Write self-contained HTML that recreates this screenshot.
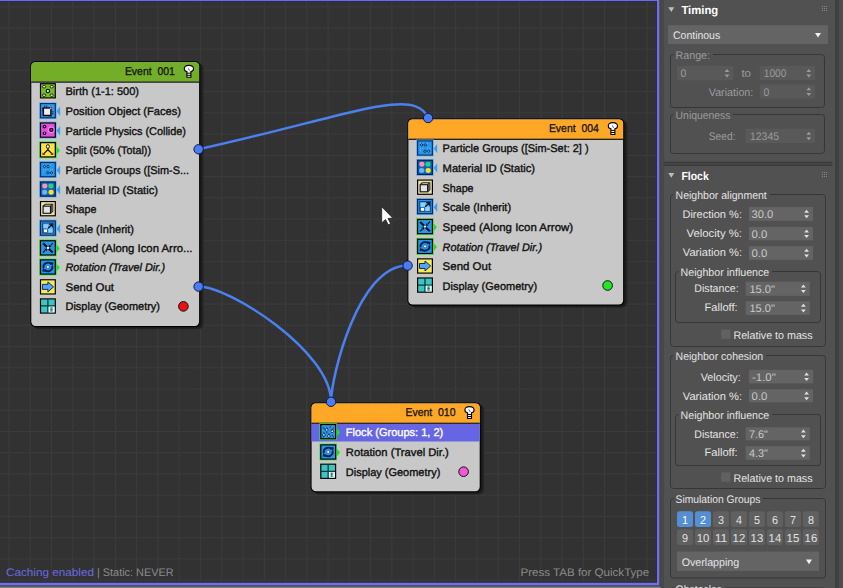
<!DOCTYPE html>
<html lang="en"><head><meta charset="utf-8"><title>Particle View</title>
<style>html,body{margin:0;padding:0;background:#454545;overflow:hidden}svg{display:block}text{font-family:"Liberation Sans", sans-serif;white-space:pre}</style></head><body>
<svg width="843" height="588" viewBox="0 0 843 588" text-rendering="geometricPrecision">
<defs><pattern id="grid" x="8.5" y="6.2" width="21.27" height="21.24" patternUnits="userSpaceOnUse"><path d="M0.5 0 V21.24 M0 0.5 H21.27" stroke="#3b3b3b" stroke-width="1" fill="none"/></pattern>
<pattern id="grip" width="2" height="2" patternUnits="userSpaceOnUse"><rect width="1" height="1" fill="#8a8a8a"/></pattern></defs>
<rect width="843" height="588" fill="#454545"/>
<rect x="-5" y="-5" width="665.5" height="591.6" fill="#3c3c74"/>
<rect x="-5" y="-5" width="664.6" height="590.3" fill="#7671ce"/>
<rect x="-5" y="0.95" width="662" height="581.85" fill="#28286a"/>
<rect x="-5" y="2" width="661.1" height="579.7" fill="#323232"/>
<rect x="0" y="2" width="656.1" height="579.7" fill="url(#grid)"/>
<g fill="none" stroke="#4b80f0" stroke-width="2.5" stroke-linecap="round">
<path d="M198.3 149.3 C344.7 117.3 415.3 85.2 428.1 118.2"/>
<path d="M198.7 286.4 C229.3 286.4 331.1 351.6 331.1 401.8"/>
<path d="M407.5 265.4 C358.2 265.4 331.1 376.7 331.1 401.8"/>
</g>
<rect x="33.7" y="63.4" width="169.8" height="265.8" rx="5" fill="#1a1a1a" opacity="0.6"/>
<rect x="31.9" y="62.4" width="169.8" height="265.8" rx="5" fill="#161616" opacity="0.8"/>
<rect x="30.3" y="61.2" width="169.8" height="265.8" rx="5" fill="#000"/>
<rect x="31.3" y="62.2" width="167.8" height="263.8" rx="4.2" fill="#c8c8c8"/>
<path d="M31.3 81.7 V66.2 Q31.3 62.2 35.3 62.2 H195.1 Q199.1 62.2 199.1 66.2 V81.7Z" fill="#73ae28"/>
<rect x="31.3" y="81.5" width="167.8" height="1.2" fill="#111"/>
<text x="124.9" y="74.5" font-size="11.3" fill="#141414" stroke="#141414" stroke-width="0.3" textLength="50.0" lengthAdjust="spacingAndGlyphs">Event  001</text>
<g transform="translate(183.9,64.9)"><path d="M5 0.5 C8.4 0.5 9.6 2.2 9.6 3.8 C9.6 5.4 8.2 6.4 7 6.6 V12.4 H3 V6.6 C1.8 6.4 0.4 5.4 0.4 3.8 C0.4 2.2 1.6 0.5 5 0.5Z" fill="#fff" stroke="#000" stroke-width="1.1"/><path d="M3 8.3 H7 M3 10.4 H7" stroke="#000" stroke-width="1"/><path d="M4.4 3.4 L5.6 5.8" stroke="#333" stroke-width="0.8"/></g>
<g transform="translate(39.90,83.10) scale(1,0.96)"><rect x="0" y="0" width="16" height="16" fill="#000"/><rect x="1.2" y="1.2" width="13.6" height="13.6" fill="#7ab82a"/><ellipse cx="4.2" cy="3.8" rx="1.7" ry="1.3" fill="#e4f6c4" stroke="#14300a" stroke-width="1"/><ellipse cx="11.8" cy="3.8" rx="1.7" ry="1.3" fill="#e4f6c4" stroke="#14300a" stroke-width="1"/><ellipse cx="4.2" cy="12.6" rx="1.7" ry="1.3" fill="#e4f6c4" stroke="#14300a" stroke-width="1"/><ellipse cx="11.8" cy="12.6" rx="1.7" ry="1.3" fill="#e4f6c4" stroke="#14300a" stroke-width="1"/><circle cx="8" cy="8.3" r="1.7" fill="#fff" stroke="#0a1a04" stroke-width="1.2"/></g>
<text x="65.5" y="95.2" font-size="11.1" fill="#0e0e0e" stroke="#0e0e0e" stroke-width="0.35" textLength="73.5" lengthAdjust="spacingAndGlyphs">Birth (1-1: 500)</text>
<path d="M60.1 106.6 V116.0 L56.5 111.3Z" fill="#37a1f2"/>
<g transform="translate(39.90,103.00) scale(1,0.96)"><rect x="-0.8" y="-0.8" width="17.6" height="17.6" fill="#5cb4f8"/><rect x="0" y="0" width="16" height="16" fill="#0a2a6c"/><rect x="1.2" y="1.2" width="13.6" height="13.6" fill="#3a98e2"/><rect x="3.4" y="5.2" width="7.6" height="7.8" fill="#f0ecec" stroke="#0c0c14" stroke-width="1.5"/><path d="M4.8 2.6 V4 M6.8 2.6 V4 M12 9.2 H13.6 M12 11.2 H13.6 M11.2 13.6 V14.4 M9.4 13.8 V14.4 M2.2 6 H3 M2.2 8 H3" stroke="#0c1430" stroke-width="0.9"/><circle cx="10.9" cy="5.4" r="1" fill="#fff" stroke="#111" stroke-width="0.5"/></g>
<text x="65.5" y="115.1" font-size="11.1" fill="#0e0e0e" stroke="#0e0e0e" stroke-width="0.35" textLength="115.5" lengthAdjust="spacingAndGlyphs">Position Object (Faces)</text>
<path d="M60.1 126.0 V135.4 L56.5 130.7Z" fill="#37a1f2"/>
<g transform="translate(39.90,122.40) scale(1,0.96)"><rect x="-0.8" y="-0.8" width="17.6" height="17.6" fill="#5cb4f8"/><rect x="0" y="0" width="16" height="16" fill="#000"/><rect x="1.2" y="1.2" width="13.6" height="13.6" fill="#e44fdc"/><circle cx="4.6" cy="4.3" r="1.3" fill="#f6a0f0" stroke="#2a0630" stroke-width="1.3"/><circle cx="4.6" cy="11.3" r="1.3" fill="#f6a0f0" stroke="#2a0630" stroke-width="1.3"/><circle cx="11.4" cy="7.8" r="1.6" fill="#a030a8" stroke="#2a0630" stroke-width="1.3"/><circle cx="11.4" cy="7.8" r="3.1" fill="none" stroke="#f8c0f4" stroke-width="0.7" opacity="0.8"/></g>
<text x="65.5" y="134.5" font-size="11.1" fill="#0e0e0e" stroke="#0e0e0e" stroke-width="0.35" textLength="120.5" lengthAdjust="spacingAndGlyphs">Particle Physics (Collide)</text>
<path d="M56.3 146.2 V154.6 L59.9 150.4Z" fill="#22e022"/>
<g transform="translate(39.90,142.10) scale(1,0.96)"><rect x="-0.8" y="-0.8" width="17.6" height="17.6" fill="#3ee03e"/><rect x="0" y="0" width="16" height="16" fill="#000"/><rect x="1.2" y="1.2" width="13.6" height="13.6" fill="#ffe244"/><path d="M8 6 L8 8 L4 12 M8 8 L12 12" stroke="#201000" stroke-width="1.3" fill="none"/><path d="M2.6 10.8 L5.6 13.2 L2.6 13.4Z M13.4 10.8 L10.4 13.2 L13.4 13.4Z" fill="#6a2a08"/><ellipse cx="8" cy="4.6" rx="1.5" ry="2" fill="#fff" stroke="#000" stroke-width="0.9"/></g>
<text x="65.5" y="154.2" font-size="11.1" fill="#0e0e0e" stroke="#0e0e0e" stroke-width="0.35" textLength="85.5" lengthAdjust="spacingAndGlyphs">Split (50% (Total))</text>
<path d="M60.1 165.5 V174.9 L56.5 170.2Z" fill="#37a1f2"/>
<g transform="translate(39.90,161.90) scale(1,0.96)"><rect x="-0.8" y="-0.8" width="17.6" height="17.6" fill="#5cb4f8"/><rect x="0" y="0" width="16" height="16" fill="#0b2f66"/><rect x="1.2" y="1.2" width="13.6" height="13.6" fill="#2496ec"/><g fill="#8fd0ff"><rect x="3" y="3" width="0.9" height="0.9"/><rect x="3" y="5.4" width="0.9" height="0.9"/><rect x="3" y="7.8" width="0.9" height="0.9"/><rect x="3" y="10.2" width="0.9" height="0.9"/><rect x="5.4" y="3" width="0.9" height="0.9"/><rect x="5.4" y="5.4" width="0.9" height="0.9"/><rect x="5.4" y="7.8" width="0.9" height="0.9"/><rect x="7.8" y="3" width="0.9" height="0.9"/><rect x="7.8" y="5.4" width="0.9" height="0.9"/><rect x="7.8" y="10.2" width="0.9" height="0.9"/><rect x="7.8" y="12.4" width="0.9" height="0.9"/><rect x="10.2" y="3" width="0.9" height="0.9"/><rect x="10.2" y="7.8" width="0.9" height="0.9"/><rect x="10.2" y="10.2" width="0.9" height="0.9"/><rect x="10.2" y="12.4" width="0.9" height="0.9"/><rect x="12.4" y="7.8" width="0.9" height="0.9"/><rect x="12.4" y="10.2" width="0.9" height="0.9"/><rect x="12.4" y="12.4" width="0.9" height="0.9"/></g><circle cx="4.6" cy="4.8" r="1.2" fill="#52b4f8" stroke="#0a2450" stroke-width="0.9"/><circle cx="8.2" cy="4.8" r="1.2" fill="#52b4f8" stroke="#0a2450" stroke-width="0.9"/><circle cx="8" cy="11.4" r="1.2" fill="#52b4f8" stroke="#0a2450" stroke-width="0.9"/><circle cx="11.6" cy="11.4" r="1.2" fill="#52b4f8" stroke="#0a2450" stroke-width="0.9"/></g>
<text x="65.5" y="174.0" font-size="11.1" fill="#0e0e0e" stroke="#0e0e0e" stroke-width="0.35" textLength="123.5" lengthAdjust="spacingAndGlyphs">Particle Groups ([Sim-S...</text>
<path d="M60.1 185.0 V194.4 L56.5 189.7Z" fill="#37a1f2"/>
<g transform="translate(39.90,181.40) scale(1,0.96)"><rect x="-0.8" y="-0.8" width="17.6" height="17.6" fill="#5cb4f8"/><rect x="0" y="0" width="16" height="16" fill="#071f4a"/><rect x="1.2" y="1.2" width="13.6" height="13.6" fill="#1b5fb4"/><circle cx="4.9" cy="4.8" r="2.6" fill="#f596b4"/><circle cx="11" cy="4.8" r="2.6" fill="#1fd486"/><circle cx="4.7" cy="11.2" r="2.6" fill="#62baf4"/><circle cx="11.2" cy="11.2" r="2.6" fill="#f4e424"/></g>
<text x="65.5" y="193.5" font-size="11.1" fill="#0e0e0e" stroke="#0e0e0e" stroke-width="0.35" textLength="92.5" lengthAdjust="spacingAndGlyphs">Material ID (Static)</text>
<g transform="translate(39.90,201.00) scale(1,0.96)"><rect x="0" y="0" width="16" height="16" fill="#000"/><rect x="1.2" y="1.2" width="13.6" height="13.6" fill="#ebe3a4"/><path d="M5.4 3.4 H12.8 V10.6 L10.6 12.8 M12.8 3.4 L10.6 5.4 M5.4 3.4 L3.2 5.4" stroke="#222" stroke-width="1.1" fill="none"/><path d="M10.6 5.4 L12.8 3.4 V10.6 L10.6 12.8Z" fill="#555"/><rect x="3.2" y="5.4" width="7.4" height="7.4" fill="#e4e2ea" stroke="#1a1a1a" stroke-width="1.2"/></g>
<text x="65.5" y="213.1" font-size="11.1" fill="#0e0e0e" stroke="#0e0e0e" stroke-width="0.35" textLength="31.0" lengthAdjust="spacingAndGlyphs">Shape</text>
<path d="M60.1 224.0 V233.4 L56.5 228.7Z" fill="#37a1f2"/>
<g transform="translate(39.90,220.40) scale(1,0.96)"><rect x="-0.8" y="-0.8" width="17.6" height="17.6" fill="#5cb4f8"/><rect x="0" y="0" width="16" height="16" fill="#0b2450"/><rect x="1.2" y="1.2" width="13.6" height="13.6" fill="#3398e4"/><rect x="2.7" y="2.7" width="10.6" height="10.6" fill="#3aa0ea" stroke="#123c78" stroke-width="0.9"/><rect x="3.6" y="4" width="4.8" height="4.2" fill="#8ed2fa"/><rect x="8.4" y="8.4" width="4.3" height="4.3" fill="#8ed2fa"/><rect x="8.8" y="4.6" width="3.6" height="3.4" fill="#6cc0f6"/><rect x="3.7" y="9" width="3.7" height="3.7" fill="#fff" stroke="#143a70" stroke-width="0.6"/><path d="M8.2 8.2 L11.8 4.6 M9.2 4 H12.4 V7.2" stroke="#08142e" stroke-width="1.3" fill="none"/></g>
<text x="65.5" y="232.5" font-size="11.1" fill="#0e0e0e" stroke="#0e0e0e" stroke-width="0.35" textLength="68.5" lengthAdjust="spacingAndGlyphs">Scale (Inherit)</text>
<path d="M56.3 244.3 V252.7 L59.9 248.5Z" fill="#22e022"/>
<g transform="translate(39.90,240.20) scale(1,0.96)"><rect x="-0.8" y="-0.8" width="17.6" height="17.6" fill="#3ee03e"/><rect x="0" y="0" width="16" height="16" fill="#000"/><rect x="1.2" y="1.2" width="13.6" height="13.6" fill="#2c96e6"/><path d="M3.2 3.2 L12.8 12.8" stroke="#06142c" stroke-width="2.3"/><path d="M13 3 L10.6 5.4 M3 13 L5.4 10.6" stroke="#06142c" stroke-width="1.2"/><path d="M8.8 4.2 L9.2 7 L12 7.2Z M7.2 11.8 L6.8 9 L4 8.8Z" fill="#06142c"/><rect x="6.7" y="6.7" width="2.6" height="2.6" fill="#fff" stroke="#06142c" stroke-width="0.5"/></g>
<text x="65.5" y="252.3" font-size="11.1" fill="#0e0e0e" stroke="#0e0e0e" stroke-width="0.35" textLength="127.0" lengthAdjust="spacingAndGlyphs">Speed (Along Icon Arro...</text>
<path d="M56.3 263.4 V271.8 L59.9 267.6Z" fill="#22e022"/>
<g transform="translate(39.90,259.30) scale(1,0.96)"><rect x="-0.8" y="-0.8" width="17.6" height="17.6" fill="#3ee03e"/><rect x="0" y="0" width="16" height="16" fill="#000"/><rect x="1.2" y="1.2" width="13.6" height="13.6" fill="#2496ec"/><path d="M3.7 9 A4.4 4.4 0 0 1 11.4 5.2" stroke="#0a2050" stroke-width="2" fill="none"/><path d="M12.3 7 A4.4 4.4 0 0 1 4.6 10.8" stroke="#0a2050" stroke-width="2" fill="none"/><path d="M9.6 3 L13.6 3.2 L12.8 7.2Z M6.4 13 L2.4 12.8 L3.2 8.8Z" fill="#0a2050"/><circle cx="8" cy="8" r="1.5" fill="#fff" stroke="#0a2050" stroke-width="0.5"/></g>
<text x="65.5" y="271.4" font-size="11.1" fill="#0e0e0e" font-style="italic" stroke="#0e0e0e" stroke-width="0.35" textLength="99.5" lengthAdjust="spacingAndGlyphs">Rotation (Travel Dir.)</text>
<g transform="translate(39.90,279.20) scale(1,0.96)"><rect x="0" y="0" width="16" height="16" fill="#000"/><rect x="1.2" y="1.2" width="13.6" height="13.6" fill="#f9ea52"/><path d="M2.5 5.4 H8 V2.8 L13.7 8 L8 13.2 V10.6 H2.5Z" fill="#52a4fc" stroke="#0c2a66" stroke-width="1"/></g>
<text x="65.5" y="291.3" font-size="11.1" fill="#0e0e0e" stroke="#0e0e0e" stroke-width="0.35" textLength="48.5" lengthAdjust="spacingAndGlyphs">Send Out</text>
<g transform="translate(39.90,298.30) scale(1,0.96)"><rect x="0" y="0" width="16" height="16" fill="#000"/><rect x="1.2" y="1.2" width="13.6" height="13.6" fill="#3ec4c2"/><path d="M8 1 V15 M1 8 H15" stroke="#0a3a3a" stroke-width="1.3"/><rect x="8.7" y="8.7" width="6" height="6" fill="#eafafa"/><path d="M10.4 10 H13 M10.4 11.6 H13 M10.4 13.2 H13 M11.2 9.6 V13.6" stroke="#1a5a5a" stroke-width="0.8"/></g>
<text x="65.5" y="310.4" font-size="11.1" fill="#0e0e0e" stroke="#0e0e0e" stroke-width="0.35" textLength="94.5" lengthAdjust="spacingAndGlyphs">Display (Geometry)</text>
<circle cx="183.4" cy="306.4" r="4.8" fill="#ee1111" stroke="#101010" stroke-width="1"/>
<rect x="410.8" y="120.6" width="216.7" height="187.2" rx="5" fill="#1a1a1a" opacity="0.6"/>
<rect x="409.0" y="119.6" width="216.7" height="187.2" rx="5" fill="#161616" opacity="0.8"/>
<rect x="407.4" y="118.4" width="216.7" height="187.2" rx="5" fill="#000"/>
<rect x="408.4" y="119.4" width="214.7" height="185.2" rx="4.2" fill="#c8c8c8"/>
<path d="M408.4 138.9 V123.4 Q408.4 119.4 412.4 119.4 H619.1 Q623.1 119.4 623.1 123.4 V138.9Z" fill="#ffa726"/>
<rect x="408.4" y="138.7" width="214.7" height="1.2" fill="#111"/>
<text x="548.9" y="131.7" font-size="11.3" fill="#141414" stroke="#141414" stroke-width="0.3" textLength="50.0" lengthAdjust="spacingAndGlyphs">Event  004</text>
<g transform="translate(607.9,122.1)"><path d="M5 0.5 C8.4 0.5 9.6 2.2 9.6 3.8 C9.6 5.4 8.2 6.4 7 6.6 V12.4 H3 V6.6 C1.8 6.4 0.4 5.4 0.4 3.8 C0.4 2.2 1.6 0.5 5 0.5Z" fill="#fff" stroke="#000" stroke-width="1.1"/><path d="M3 8.3 H7 M3 10.4 H7" stroke="#000" stroke-width="1"/><path d="M4.4 3.4 L5.6 5.8" stroke="#333" stroke-width="0.8"/></g>
<path d="M437.2 143.9 V153.3 L433.6 148.6Z" fill="#37a1f2"/>
<g transform="translate(417.00,140.30) scale(1,0.96)"><rect x="-0.8" y="-0.8" width="17.6" height="17.6" fill="#5cb4f8"/><rect x="0" y="0" width="16" height="16" fill="#0b2f66"/><rect x="1.2" y="1.2" width="13.6" height="13.6" fill="#2496ec"/><g fill="#8fd0ff"><rect x="3" y="3" width="0.9" height="0.9"/><rect x="3" y="5.4" width="0.9" height="0.9"/><rect x="3" y="7.8" width="0.9" height="0.9"/><rect x="3" y="10.2" width="0.9" height="0.9"/><rect x="5.4" y="3" width="0.9" height="0.9"/><rect x="5.4" y="5.4" width="0.9" height="0.9"/><rect x="5.4" y="7.8" width="0.9" height="0.9"/><rect x="7.8" y="3" width="0.9" height="0.9"/><rect x="7.8" y="5.4" width="0.9" height="0.9"/><rect x="7.8" y="10.2" width="0.9" height="0.9"/><rect x="7.8" y="12.4" width="0.9" height="0.9"/><rect x="10.2" y="3" width="0.9" height="0.9"/><rect x="10.2" y="7.8" width="0.9" height="0.9"/><rect x="10.2" y="10.2" width="0.9" height="0.9"/><rect x="10.2" y="12.4" width="0.9" height="0.9"/><rect x="12.4" y="7.8" width="0.9" height="0.9"/><rect x="12.4" y="10.2" width="0.9" height="0.9"/><rect x="12.4" y="12.4" width="0.9" height="0.9"/></g><circle cx="4.6" cy="4.8" r="1.2" fill="#52b4f8" stroke="#0a2450" stroke-width="0.9"/><circle cx="8.2" cy="4.8" r="1.2" fill="#52b4f8" stroke="#0a2450" stroke-width="0.9"/><circle cx="8" cy="11.4" r="1.2" fill="#52b4f8" stroke="#0a2450" stroke-width="0.9"/><circle cx="11.6" cy="11.4" r="1.2" fill="#52b4f8" stroke="#0a2450" stroke-width="0.9"/></g>
<text x="442.6" y="152.4" font-size="11.1" fill="#0e0e0e" stroke="#0e0e0e" stroke-width="0.35" textLength="146.0" lengthAdjust="spacingAndGlyphs">Particle Groups ([Sim-Set: 2] )</text>
<path d="M437.2 163.3 V172.7 L433.6 168.0Z" fill="#37a1f2"/>
<g transform="translate(417.00,159.70) scale(1,0.96)"><rect x="-0.8" y="-0.8" width="17.6" height="17.6" fill="#5cb4f8"/><rect x="0" y="0" width="16" height="16" fill="#071f4a"/><rect x="1.2" y="1.2" width="13.6" height="13.6" fill="#1b5fb4"/><circle cx="4.9" cy="4.8" r="2.6" fill="#f596b4"/><circle cx="11" cy="4.8" r="2.6" fill="#1fd486"/><circle cx="4.7" cy="11.2" r="2.6" fill="#62baf4"/><circle cx="11.2" cy="11.2" r="2.6" fill="#f4e424"/></g>
<text x="442.6" y="171.8" font-size="11.1" fill="#0e0e0e" stroke="#0e0e0e" stroke-width="0.35" textLength="92.5" lengthAdjust="spacingAndGlyphs">Material ID (Static)</text>
<g transform="translate(417.00,179.50) scale(1,0.96)"><rect x="0" y="0" width="16" height="16" fill="#000"/><rect x="1.2" y="1.2" width="13.6" height="13.6" fill="#ebe3a4"/><path d="M5.4 3.4 H12.8 V10.6 L10.6 12.8 M12.8 3.4 L10.6 5.4 M5.4 3.4 L3.2 5.4" stroke="#222" stroke-width="1.1" fill="none"/><path d="M10.6 5.4 L12.8 3.4 V10.6 L10.6 12.8Z" fill="#555"/><rect x="3.2" y="5.4" width="7.4" height="7.4" fill="#e4e2ea" stroke="#1a1a1a" stroke-width="1.2"/></g>
<text x="442.6" y="191.6" font-size="11.1" fill="#0e0e0e" stroke="#0e0e0e" stroke-width="0.35" textLength="31.0" lengthAdjust="spacingAndGlyphs">Shape</text>
<path d="M437.2 202.5 V211.9 L433.6 207.2Z" fill="#37a1f2"/>
<g transform="translate(417.00,198.90) scale(1,0.96)"><rect x="-0.8" y="-0.8" width="17.6" height="17.6" fill="#5cb4f8"/><rect x="0" y="0" width="16" height="16" fill="#0b2450"/><rect x="1.2" y="1.2" width="13.6" height="13.6" fill="#3398e4"/><rect x="2.7" y="2.7" width="10.6" height="10.6" fill="#3aa0ea" stroke="#123c78" stroke-width="0.9"/><rect x="3.6" y="4" width="4.8" height="4.2" fill="#8ed2fa"/><rect x="8.4" y="8.4" width="4.3" height="4.3" fill="#8ed2fa"/><rect x="8.8" y="4.6" width="3.6" height="3.4" fill="#6cc0f6"/><rect x="3.7" y="9" width="3.7" height="3.7" fill="#fff" stroke="#143a70" stroke-width="0.6"/><path d="M8.2 8.2 L11.8 4.6 M9.2 4 H12.4 V7.2" stroke="#08142e" stroke-width="1.3" fill="none"/></g>
<text x="442.6" y="211.0" font-size="11.1" fill="#0e0e0e" stroke="#0e0e0e" stroke-width="0.35" textLength="68.5" lengthAdjust="spacingAndGlyphs">Scale (Inherit)</text>
<path d="M433.4 223.0 V231.4 L437.0 227.2Z" fill="#22e022"/>
<g transform="translate(417.00,218.90) scale(1,0.96)"><rect x="-0.8" y="-0.8" width="17.6" height="17.6" fill="#3ee03e"/><rect x="0" y="0" width="16" height="16" fill="#000"/><rect x="1.2" y="1.2" width="13.6" height="13.6" fill="#2c96e6"/><path d="M3.2 3.2 L12.8 12.8" stroke="#06142c" stroke-width="2.3"/><path d="M13 3 L10.6 5.4 M3 13 L5.4 10.6" stroke="#06142c" stroke-width="1.2"/><path d="M8.8 4.2 L9.2 7 L12 7.2Z M7.2 11.8 L6.8 9 L4 8.8Z" fill="#06142c"/><rect x="6.7" y="6.7" width="2.6" height="2.6" fill="#fff" stroke="#06142c" stroke-width="0.5"/></g>
<text x="442.6" y="231.0" font-size="11.1" fill="#0e0e0e" stroke="#0e0e0e" stroke-width="0.35" textLength="130.5" lengthAdjust="spacingAndGlyphs">Speed (Along Icon Arrow)</text>
<path d="M433.4 242.8 V251.2 L437.0 247.0Z" fill="#22e022"/>
<g transform="translate(417.00,238.70) scale(1,0.96)"><rect x="-0.8" y="-0.8" width="17.6" height="17.6" fill="#3ee03e"/><rect x="0" y="0" width="16" height="16" fill="#000"/><rect x="1.2" y="1.2" width="13.6" height="13.6" fill="#2496ec"/><path d="M3.7 9 A4.4 4.4 0 0 1 11.4 5.2" stroke="#0a2050" stroke-width="2" fill="none"/><path d="M12.3 7 A4.4 4.4 0 0 1 4.6 10.8" stroke="#0a2050" stroke-width="2" fill="none"/><path d="M9.6 3 L13.6 3.2 L12.8 7.2Z M6.4 13 L2.4 12.8 L3.2 8.8Z" fill="#0a2050"/><circle cx="8" cy="8" r="1.5" fill="#fff" stroke="#0a2050" stroke-width="0.5"/></g>
<text x="442.6" y="250.8" font-size="11.1" fill="#0e0e0e" font-style="italic" stroke="#0e0e0e" stroke-width="0.35" textLength="99.5" lengthAdjust="spacingAndGlyphs">Rotation (Travel Dir.)</text>
<g transform="translate(417.00,258.30) scale(1,0.96)"><rect x="0" y="0" width="16" height="16" fill="#000"/><rect x="1.2" y="1.2" width="13.6" height="13.6" fill="#f9ea52"/><path d="M2.5 5.4 H8 V2.8 L13.7 8 L8 13.2 V10.6 H2.5Z" fill="#52a4fc" stroke="#0c2a66" stroke-width="1"/></g>
<text x="442.6" y="270.4" font-size="11.1" fill="#0e0e0e" stroke="#0e0e0e" stroke-width="0.35" textLength="48.5" lengthAdjust="spacingAndGlyphs">Send Out</text>
<g transform="translate(417.00,277.40) scale(1,0.96)"><rect x="0" y="0" width="16" height="16" fill="#000"/><rect x="1.2" y="1.2" width="13.6" height="13.6" fill="#3ec4c2"/><path d="M8 1 V15 M1 8 H15" stroke="#0a3a3a" stroke-width="1.3"/><rect x="8.7" y="8.7" width="6" height="6" fill="#eafafa"/><path d="M10.4 10 H13 M10.4 11.6 H13 M10.4 13.2 H13 M11.2 9.6 V13.6" stroke="#1a5a5a" stroke-width="0.8"/></g>
<text x="442.6" y="289.5" font-size="11.1" fill="#0e0e0e" stroke="#0e0e0e" stroke-width="0.35" textLength="94.5" lengthAdjust="spacingAndGlyphs">Display (Geometry)</text>
<circle cx="607.6" cy="285.5" r="4.8" fill="#22e822" stroke="#101010" stroke-width="1"/>
<rect x="314.0" y="404.6" width="170.1" height="89.9" rx="5" fill="#1a1a1a" opacity="0.6"/>
<rect x="312.2" y="403.6" width="170.1" height="89.9" rx="5" fill="#161616" opacity="0.8"/>
<rect x="310.6" y="402.4" width="170.1" height="89.9" rx="5" fill="#000"/>
<rect x="311.6" y="403.4" width="168.1" height="87.9" rx="4.2" fill="#c8c8c8"/>
<path d="M311.6 422.9 V407.4 Q311.6 403.4 315.6 403.4 H475.7 Q479.7 403.4 479.7 407.4 V422.9Z" fill="#ffa726"/>
<rect x="311.6" y="422.7" width="168.1" height="1.2" fill="#111"/>
<text x="405.5" y="415.7" font-size="11.3" fill="#141414" stroke="#141414" stroke-width="0.3" textLength="50.0" lengthAdjust="spacingAndGlyphs">Event  010</text>
<g transform="translate(464.5,406.1)"><path d="M5 0.5 C8.4 0.5 9.6 2.2 9.6 3.8 C9.6 5.4 8.2 6.4 7 6.6 V12.4 H3 V6.6 C1.8 6.4 0.4 5.4 0.4 3.8 C0.4 2.2 1.6 0.5 5 0.5Z" fill="#fff" stroke="#000" stroke-width="1.1"/><path d="M3 8.3 H7 M3 10.4 H7" stroke="#000" stroke-width="1"/><path d="M4.4 3.4 L5.6 5.8" stroke="#333" stroke-width="0.8"/></g>
<rect x="311.6" y="423.9" width="168.1" height="17.6" fill="#6665e4"/>
<path d="M336.6 428.1 V436.5 L340.2 432.3Z" fill="#22e022"/>
<g transform="translate(320.20,424.00) scale(1,0.96)"><rect x="-0.8" y="-0.8" width="17.6" height="17.6" fill="#3ee03e"/><rect x="0" y="0" width="16" height="16" fill="#000"/><rect x="1.2" y="1.2" width="13.6" height="13.6" fill="#2c96e6"/><g fill="#0a2450"><rect x="2.4" y="3.4" width="1.1" height="1.1"/><rect x="3.6" y="4.6" width="1.1" height="1.1"/><rect x="9.4" y="2.8" width="1.1" height="1.1"/><rect x="12.6" y="12.8" width="1.1" height="1.1"/><rect x="11.6" y="11.2" width="1.1" height="1.1"/><rect x="6" y="8.6" width="1.1" height="1.1"/><rect x="12.8" y="3.6" width="1.1" height="1.1"/><rect x="2.6" y="13" width="1.1" height="1.1"/></g><path d="M6.6 3.7 L7.9 6.2 A1.3 1.3 0 1 1 5.3 6.2Z" fill="#fff" stroke="#081c48" stroke-width="0.9"/><path d="M12 5.1 L13.3 7.6 A1.3 1.3 0 1 1 10.7 7.6Z" fill="#fff" stroke="#081c48" stroke-width="0.9"/><path d="M3.7 8.9 L5.0 11.4 A1.3 1.3 0 1 1 2.4 11.4Z" fill="#fff" stroke="#081c48" stroke-width="0.9"/><path d="M8.7 10.1 L10.0 12.6 A1.3 1.3 0 1 1 7.4 12.6Z" fill="#fff" stroke="#081c48" stroke-width="0.9"/></g>
<text x="345.8" y="436.1" font-size="11.1" fill="#fff" stroke="#fff" stroke-width="0.35" textLength="97.5" lengthAdjust="spacingAndGlyphs">Flock (Groups: 1, 2)</text>
<path d="M336.6 448.4 V456.8 L340.2 452.6Z" fill="#22e022"/>
<g transform="translate(320.20,444.30) scale(1,0.96)"><rect x="-0.8" y="-0.8" width="17.6" height="17.6" fill="#3ee03e"/><rect x="0" y="0" width="16" height="16" fill="#000"/><rect x="1.2" y="1.2" width="13.6" height="13.6" fill="#2496ec"/><path d="M3.7 9 A4.4 4.4 0 0 1 11.4 5.2" stroke="#0a2050" stroke-width="2" fill="none"/><path d="M12.3 7 A4.4 4.4 0 0 1 4.6 10.8" stroke="#0a2050" stroke-width="2" fill="none"/><path d="M9.6 3 L13.6 3.2 L12.8 7.2Z M6.4 13 L2.4 12.8 L3.2 8.8Z" fill="#0a2050"/><circle cx="8" cy="8" r="1.5" fill="#fff" stroke="#0a2050" stroke-width="0.5"/></g>
<text x="345.8" y="456.4" font-size="11.1" fill="#0e0e0e" stroke="#0e0e0e" stroke-width="0.35" textLength="103.0" lengthAdjust="spacingAndGlyphs">Rotation (Travel Dir.)</text>
<g transform="translate(320.20,463.60) scale(1,0.96)"><rect x="0" y="0" width="16" height="16" fill="#000"/><rect x="1.2" y="1.2" width="13.6" height="13.6" fill="#3ec4c2"/><path d="M8 1 V15 M1 8 H15" stroke="#0a3a3a" stroke-width="1.3"/><rect x="8.7" y="8.7" width="6" height="6" fill="#eafafa"/><path d="M10.4 10 H13 M10.4 11.6 H13 M10.4 13.2 H13 M11.2 9.6 V13.6" stroke="#1a5a5a" stroke-width="0.8"/></g>
<text x="345.8" y="475.7" font-size="11.1" fill="#0e0e0e" stroke="#0e0e0e" stroke-width="0.35" textLength="94.5" lengthAdjust="spacingAndGlyphs">Display (Geometry)</text>
<circle cx="463.6" cy="471.7" r="4.8" fill="#f258d8" stroke="#101010" stroke-width="1"/>
<circle cx="198.6" cy="149.3" r="4.7" fill="#4a7cf2" stroke="#0e1848" stroke-width="1"/>
<circle cx="198.6" cy="286.6" r="4.7" fill="#4a7cf2" stroke="#0e1848" stroke-width="1"/>
<circle cx="428.1" cy="118" r="4.7" fill="#4a7cf2" stroke="#0e1848" stroke-width="1"/>
<circle cx="407.6" cy="265.6" r="4.7" fill="#4a7cf2" stroke="#0e1848" stroke-width="1"/>
<circle cx="331" cy="401.8" r="4.7" fill="#4a7cf2" stroke="#0e1848" stroke-width="1"/>
<path d="M381.7 206.7 V222.9 L385.5 219.5 L388.2 224.8 L390.6 223.6 L388 218.5 L392.7 218.1Z" fill="#fff" stroke="#222" stroke-width="0.8" stroke-linejoin="round"/>
<text x="6.0" y="575.6" font-size="11" fill="#6a6ae2" textLength="88.0" lengthAdjust="spacingAndGlyphs">Caching enabled</text>
<text x="97.0" y="575.6" font-size="11" fill="#8c8c8c" textLength="76.5" lengthAdjust="spacingAndGlyphs">| Static: NEVER</text>
<text x="520.5" y="575.6" font-size="11" fill="#8c8c8c" textLength="128.7" lengthAdjust="spacingAndGlyphs">Press TAB for QuickType</text>
<rect x="659.6" y="0" width="183.4" height="588" fill="#3c3c50"/>
<rect x="660.5" y="0" width="3.3" height="588" fill="#484a45"/>
<rect x="663.8" y="0" width="171.4" height="588" fill="#515151"/>
<rect x="835.1" y="0" width="3.7" height="588" fill="#404040"/>
<rect x="838.8" y="0" width="4.2" height="588" fill="#4c4c4c"/>
<rect x="663.8" y="161.9" width="168.4" height="4" fill="#444"/>
<rect x="663.8" y="161.9" width="168.4" height="1" fill="#3a3a3a"/>
<rect x="663.8" y="164.9" width="168.4" height="1" fill="#3a3a3a"/>
<rect x="0" y="586.6" width="660.5" height="3" fill="#7c837c"/>
<path d="M668.3 7.2 H674.3 L671.3 12.0Z" fill="#bdbdbd"/>
<text x="681.4" y="13.8" font-size="11.6" fill="#fff" font-weight="bold" textLength="36.8" lengthAdjust="spacingAndGlyphs">Timing</text>
<rect x="822" y="6.0" width="6" height="6" fill="url(#grip)"/>
<rect x="668.0" y="25.2" width="160.0" height="18.8" fill="#646464"/>
<text x="673.0" y="39.0" font-size="11" fill="#e4e4e4" textLength="47.2" lengthAdjust="spacingAndGlyphs">Continous</text>
<path d="M815.0 33.0 H821.0 L818.0 37.6Z" fill="#f0f0f0"/>
<rect x="670.5" y="54.5" width="154.0" height="53.0" rx="3" fill="none" stroke="#363636" stroke-width="1"/>
<rect x="673.6" y="52.5" width="39.4" height="4" fill="#515151"/>
<text x="675.6" y="58.7" font-size="11" fill="#9c9c9c" textLength="34.4" lengthAdjust="spacingAndGlyphs">Range:</text>
<rect x="677.0" y="66.0" width="56.4" height="14.2" fill="#595959"/>
<text x="680.4" y="77.1" font-size="11" fill="#9c9c9c" textLength="5.8" lengthAdjust="spacingAndGlyphs">0</text>
<path d="M724.6 71.9 L727.0 68.9 L729.4 71.9Z M724.6 74.5 L727.0 77.5 L729.4 74.5Z" fill="#9a9a9a"/>
<text x="741.4" y="77.2" font-size="11" fill="#9c9c9c" textLength="9.6" lengthAdjust="spacingAndGlyphs">to</text>
<rect x="759.8" y="66.0" width="55.4" height="14.2" fill="#595959"/>
<text x="763.8" y="77.1" font-size="11" fill="#9c9c9c" textLength="22.5" lengthAdjust="spacingAndGlyphs">1000</text>
<path d="M806.4 71.9 L808.8 68.9 L811.2 71.9Z M806.4 74.5 L808.8 77.5 L811.2 74.5Z" fill="#9a9a9a"/>
<text x="708.8" y="95.6" font-size="11" fill="#9c9c9c" textLength="44.5" lengthAdjust="spacingAndGlyphs">Variation:</text>
<rect x="759.8" y="84.5" width="55.4" height="14.1" fill="#595959"/>
<text x="763.4" y="95.5" font-size="11" fill="#9c9c9c" textLength="5.8" lengthAdjust="spacingAndGlyphs">0</text>
<path d="M806.4 90.3 L808.8 87.3 L811.2 90.3Z M806.4 93.0 L808.8 96.0 L811.2 93.0Z" fill="#9a9a9a"/>
<rect x="670.5" y="114.5" width="154.0" height="39.0" rx="3" fill="none" stroke="#363636" stroke-width="1"/>
<rect x="673.6" y="112.5" width="59.9" height="4" fill="#515151"/>
<text x="675.6" y="118.7" font-size="11" fill="#9c9c9c" textLength="54.9" lengthAdjust="spacingAndGlyphs">Uniqueness</text>
<text x="708.8" y="140.2" font-size="11" fill="#9c9c9c" textLength="26.7" lengthAdjust="spacingAndGlyphs">Seed:</text>
<rect x="745.7" y="128.6" width="69.5" height="14.5" fill="#595959"/>
<text x="750.0" y="139.8" font-size="11" fill="#9c9c9c" textLength="29.0" lengthAdjust="spacingAndGlyphs">12345</text>
<path d="M806.4 134.7 L808.8 131.7 L811.2 134.7Z M806.4 137.2 L808.8 140.2 L811.2 137.2Z" fill="#9a9a9a"/>
<path d="M668.3 173.0 H674.3 L671.3 177.8Z" fill="#bdbdbd"/>
<text x="681.4" y="179.6" font-size="11.6" fill="#fff" font-weight="bold" textLength="27.4" lengthAdjust="spacingAndGlyphs">Flock</text>
<rect x="822" y="171.8" width="6" height="6" fill="url(#grip)"/>
<rect x="670.5" y="194.5" width="155.0" height="152.0" rx="3" fill="none" stroke="#363636" stroke-width="1"/>
<rect x="673.6" y="192.5" width="96.2" height="4" fill="#515151"/>
<text x="675.6" y="198.7" font-size="11" fill="#e4e4e4" textLength="91.2" lengthAdjust="spacingAndGlyphs">Neighbor alignment</text>
<text x="682.4" y="217.6" font-size="11" fill="#e4e4e4" textLength="59.6" lengthAdjust="spacingAndGlyphs">Direction %:</text>
<rect x="749.0" y="207.0" width="64.0" height="13.8" fill="#646464"/>
<text x="751.6" y="217.9" font-size="11" fill="#c9c9c9" textLength="21.7" lengthAdjust="spacingAndGlyphs">30.0</text>
<path d="M804.2 212.7 L806.6 209.7 L809.0 212.7Z M804.2 215.3 L806.6 218.3 L809.0 215.3Z" fill="#e0e0e0"/>
<text x="686.5" y="237.2" font-size="11" fill="#e4e4e4" textLength="55.5" lengthAdjust="spacingAndGlyphs">Velocity %:</text>
<rect x="749.0" y="227.0" width="64.0" height="13.3" fill="#646464"/>
<text x="751.6" y="237.7" font-size="11" fill="#c9c9c9" textLength="15.8" lengthAdjust="spacingAndGlyphs">0.0</text>
<path d="M804.2 232.5 L806.6 229.5 L809.0 232.5Z M804.2 235.1 L806.6 238.1 L809.0 235.1Z" fill="#e0e0e0"/>
<text x="682.8" y="256.4" font-size="11" fill="#e4e4e4" textLength="59.2" lengthAdjust="spacingAndGlyphs">Variation %:</text>
<rect x="749.0" y="246.2" width="64.0" height="13.6" fill="#646464"/>
<text x="751.6" y="257.0" font-size="11" fill="#c9c9c9" textLength="15.8" lengthAdjust="spacingAndGlyphs">0.0</text>
<path d="M804.2 251.8 L806.6 248.8 L809.0 251.8Z M804.2 254.4 L806.6 257.4 L809.0 254.4Z" fill="#e0e0e0"/>
<rect x="675.5" y="271.5" width="145.0" height="51.0" rx="3" fill="none" stroke="#363636" stroke-width="1"/>
<rect x="678.6" y="269.5" width="93.6" height="4" fill="#515151"/>
<text x="680.6" y="275.7" font-size="11" fill="#e4e4e4" textLength="88.6" lengthAdjust="spacingAndGlyphs">Neighbor influence</text>
<text x="694.3" y="292.4" font-size="11" fill="#e4e4e4" textLength="44.3" lengthAdjust="spacingAndGlyphs">Distance:</text>
<rect x="745.7" y="281.7" width="64.1" height="14.1" fill="#646464"/>
<text x="749.4" y="292.8" font-size="11" fill="#c9c9c9" textLength="25.6" lengthAdjust="spacingAndGlyphs">15.0"</text>
<path d="M801.0 287.6 L803.4 284.6 L805.8 287.6Z M801.0 290.1 L803.4 293.1 L805.8 290.1Z" fill="#e0e0e0"/>
<text x="704.5" y="311.4" font-size="11" fill="#e4e4e4" textLength="33.2" lengthAdjust="spacingAndGlyphs">Falloff:</text>
<rect x="745.7" y="301.2" width="64.1" height="13.7" fill="#646464"/>
<text x="749.4" y="312.0" font-size="11" fill="#c9c9c9" textLength="25.6" lengthAdjust="spacingAndGlyphs">15.0"</text>
<path d="M801.0 306.8 L803.4 303.8 L805.8 306.8Z M801.0 309.4 L803.4 312.4 L805.8 309.4Z" fill="#e0e0e0"/>
<rect x="721.2" y="329.5" width="9.3" height="9.3" fill="#616161"/>
<text x="733.4" y="338.8" font-size="11" fill="#e4e4e4" textLength="79.2" lengthAdjust="spacingAndGlyphs">Relative to mass</text>
<rect x="670.5" y="355.5" width="155.0" height="133.0" rx="3" fill="none" stroke="#363636" stroke-width="1"/>
<rect x="673.6" y="353.5" width="92.5" height="4" fill="#515151"/>
<text x="675.6" y="359.7" font-size="11" fill="#e4e4e4" textLength="87.5" lengthAdjust="spacingAndGlyphs">Neighbor cohesion</text>
<text x="700.8" y="380.6" font-size="11" fill="#e4e4e4" textLength="39.9" lengthAdjust="spacingAndGlyphs">Velocity:</text>
<rect x="749.0" y="369.8" width="64.0" height="13.6" fill="#646464"/>
<text x="752.0" y="380.6" font-size="11" fill="#c9c9c9" textLength="23.7" lengthAdjust="spacingAndGlyphs">-1.0"</text>
<path d="M804.2 375.4 L806.6 372.4 L809.0 375.4Z M804.2 378.0 L806.6 381.0 L809.0 378.0Z" fill="#e0e0e0"/>
<text x="682.8" y="399.8" font-size="11" fill="#e4e4e4" textLength="59.2" lengthAdjust="spacingAndGlyphs">Variation %:</text>
<rect x="749.0" y="389.3" width="64.0" height="13.0" fill="#646464"/>
<text x="751.6" y="399.8" font-size="11" fill="#c9c9c9" textLength="15.8" lengthAdjust="spacingAndGlyphs">0.0</text>
<path d="M804.2 394.6 L806.6 391.6 L809.0 394.6Z M804.2 397.2 L806.6 400.2 L809.0 397.2Z" fill="#e0e0e0"/>
<rect x="675.5" y="414.5" width="145.0" height="51.0" rx="3" fill="none" stroke="#363636" stroke-width="1"/>
<rect x="678.6" y="412.5" width="93.6" height="4" fill="#515151"/>
<text x="680.6" y="418.7" font-size="11" fill="#e4e4e4" textLength="88.6" lengthAdjust="spacingAndGlyphs">Neighbor influence</text>
<text x="694.3" y="437.6" font-size="11" fill="#e4e4e4" textLength="44.3" lengthAdjust="spacingAndGlyphs">Distance:</text>
<rect x="745.7" y="427.3" width="64.1" height="13.0" fill="#646464"/>
<text x="749.0" y="437.8" font-size="11" fill="#c9c9c9" textLength="18.9" lengthAdjust="spacingAndGlyphs">7.6"</text>
<path d="M801.0 432.6 L803.4 429.6 L805.8 432.6Z M801.0 435.2 L803.4 438.2 L805.8 435.2Z" fill="#e0e0e0"/>
<text x="704.5" y="456.4" font-size="11" fill="#e4e4e4" textLength="33.2" lengthAdjust="spacingAndGlyphs">Falloff:</text>
<rect x="745.7" y="446.2" width="64.1" height="13.6" fill="#646464"/>
<text x="749.0" y="457.0" font-size="11" fill="#c9c9c9" textLength="18.9" lengthAdjust="spacingAndGlyphs">4.3"</text>
<path d="M801.0 451.8 L803.4 448.8 L805.8 451.8Z M801.0 454.4 L803.4 457.4 L805.8 454.4Z" fill="#e0e0e0"/>
<rect x="721.2" y="472.4" width="9.3" height="9.3" fill="#616161"/>
<text x="733.4" y="481.6" font-size="11" fill="#e4e4e4" textLength="79.2" lengthAdjust="spacingAndGlyphs">Relative to mass</text>
<rect x="670.5" y="498.5" width="155.0" height="79.5" rx="3" fill="none" stroke="#363636" stroke-width="1"/>
<rect x="673.6" y="496.5" width="89.7" height="4" fill="#515151"/>
<text x="675.6" y="502.7" font-size="11" fill="#e4e4e4" textLength="84.7" lengthAdjust="spacingAndGlyphs">Simulation Groups</text>
<rect x="677.0" y="511.2" width="16" height="15.8" rx="2.5" fill="#558ed2"/>
<text x="682.0" y="523.9" font-size="11.6" fill="#fff" textLength="6.0" lengthAdjust="spacingAndGlyphs">1</text>
<rect x="695.0" y="511.2" width="16" height="15.8" rx="2.5" fill="#558ed2"/>
<text x="700.0" y="523.9" font-size="11.6" fill="#fff" textLength="6.0" lengthAdjust="spacingAndGlyphs">2</text>
<rect x="713.0" y="511.2" width="16" height="15.8" rx="2.5" fill="#606060"/>
<text x="718.0" y="523.9" font-size="11.6" fill="#e2e2e2" textLength="6.0" lengthAdjust="spacingAndGlyphs">3</text>
<rect x="730.9" y="511.2" width="16" height="15.8" rx="2.5" fill="#606060"/>
<text x="735.9" y="523.9" font-size="11.6" fill="#e2e2e2" textLength="6.0" lengthAdjust="spacingAndGlyphs">4</text>
<rect x="748.9" y="511.2" width="16" height="15.8" rx="2.5" fill="#606060"/>
<text x="753.9" y="523.9" font-size="11.6" fill="#e2e2e2" textLength="6.0" lengthAdjust="spacingAndGlyphs">5</text>
<rect x="766.9" y="511.2" width="16" height="15.8" rx="2.5" fill="#606060"/>
<text x="771.9" y="523.9" font-size="11.6" fill="#e2e2e2" textLength="6.0" lengthAdjust="spacingAndGlyphs">6</text>
<rect x="784.9" y="511.2" width="16" height="15.8" rx="2.5" fill="#606060"/>
<text x="789.9" y="523.9" font-size="11.6" fill="#e2e2e2" textLength="6.0" lengthAdjust="spacingAndGlyphs">7</text>
<rect x="802.9" y="511.2" width="16" height="15.8" rx="2.5" fill="#606060"/>
<text x="807.9" y="523.9" font-size="11.6" fill="#e2e2e2" textLength="6.0" lengthAdjust="spacingAndGlyphs">8</text>
<rect x="677.0" y="529.2" width="16" height="15.8" rx="2.5" fill="#606060"/>
<text x="682.0" y="541.9" font-size="11.6" fill="#e2e2e2" textLength="6.0" lengthAdjust="spacingAndGlyphs">9</text>
<rect x="695.0" y="529.2" width="16" height="15.8" rx="2.5" fill="#606060"/>
<text x="696.7" y="541.9" font-size="11.6" fill="#e2e2e2" textLength="12.6" lengthAdjust="spacingAndGlyphs">10</text>
<rect x="713.0" y="529.2" width="16" height="15.8" rx="2.5" fill="#606060"/>
<text x="714.7" y="541.9" font-size="11.6" fill="#e2e2e2" textLength="12.6" lengthAdjust="spacingAndGlyphs">11</text>
<rect x="730.9" y="529.2" width="16" height="15.8" rx="2.5" fill="#606060"/>
<text x="732.6" y="541.9" font-size="11.6" fill="#e2e2e2" textLength="12.6" lengthAdjust="spacingAndGlyphs">12</text>
<rect x="748.9" y="529.2" width="16" height="15.8" rx="2.5" fill="#606060"/>
<text x="750.6" y="541.9" font-size="11.6" fill="#e2e2e2" textLength="12.6" lengthAdjust="spacingAndGlyphs">13</text>
<rect x="766.9" y="529.2" width="16" height="15.8" rx="2.5" fill="#606060"/>
<text x="768.6" y="541.9" font-size="11.6" fill="#e2e2e2" textLength="12.6" lengthAdjust="spacingAndGlyphs">14</text>
<rect x="784.9" y="529.2" width="16" height="15.8" rx="2.5" fill="#606060"/>
<text x="786.6" y="541.9" font-size="11.6" fill="#e2e2e2" textLength="12.6" lengthAdjust="spacingAndGlyphs">15</text>
<rect x="802.9" y="529.2" width="16" height="15.8" rx="2.5" fill="#606060"/>
<text x="804.6" y="541.9" font-size="11.6" fill="#e2e2e2" textLength="12.6" lengthAdjust="spacingAndGlyphs">16</text>
<rect x="677.0" y="551.6" width="142.1" height="19.3" fill="#646464"/>
<text x="681.7" y="565.6" font-size="11" fill="#e4e4e4" textLength="57.5" lengthAdjust="spacingAndGlyphs">Overlapping</text>
<path d="M806.0 559.6 H812.0 L809.0 564.2Z" fill="#f0f0f0"/>
<rect x="670.5" y="588.2" width="155" height="20" rx="3" fill="none" stroke="#353535" stroke-width="1.2"/>
<rect x="673.6" y="585" width="52" height="4" fill="#515151"/>
<text x="675.6" y="592.6" font-size="11" fill="#e4e4e4" textLength="46.4" lengthAdjust="spacingAndGlyphs">Obstacles</text>
</svg></body></html>
